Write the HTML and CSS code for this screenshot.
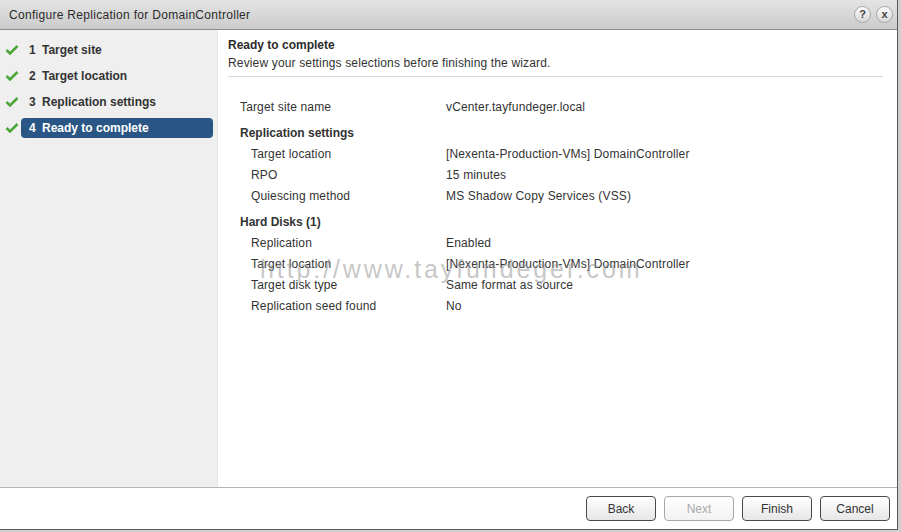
FILE: index.html
```html
<!DOCTYPE html>
<html>
    <head>
        <title>Configure Replication for DomainController</title>
        <meta charset="UTF-8">
        <link rel="stylesheet" href="styles.css">
    </head>
    <body>
        <div class="dialog">
            <div class="titlebar">
                <span class="title">Configure Replication for DomainController</span>
                <div class="title-btns">
                    <span class="round-btn">?</span>
                    <span class="round-btn">x</span>
                </div>
            </div>
            <div class="main">
                <div class="steps">
                    <div class="step">
                        <svg class="check" width="14" height="12" viewBox="0 0 14 12"><polyline points="1.5,6 5,9.5 12.5,2" /></svg>
                        <div class="step-pill"><span class="num">1</span>Target site</div>
                    </div>
                    <div class="step">
                        <svg class="check" width="14" height="12" viewBox="0 0 14 12"><polyline points="1.5,6 5,9.5 12.5,2" /></svg>
                        <div class="step-pill"><span class="num">2</span>Target location</div>
                    </div>
                    <div class="step">
                        <svg class="check" width="14" height="12" viewBox="0 0 14 12"><polyline points="1.5,6 5,9.5 12.5,2" /></svg>
                        <div class="step-pill"><span class="num">3</span>Replication settings</div>
                    </div>
                    <div class="step">
                        <svg class="check" width="14" height="12" viewBox="0 0 14 12"><polyline points="1.5,6 5,9.5 12.5,2" /></svg>
                        <div class="step-pill active"><span class="num">4</span>Ready to complete</div>
                    </div>
                </div>
                <div class="content">
                    <div class="page-head">
                        <div class="page-title">Ready to complete</div>
                        <div class="page-sub">Review your settings selections before finishing the wizard.</div>
                    </div>
                    <div class="summary">
                        <div class="label">Target site name</div>
                        <div class="value">vCenter.tayfundeger.local</div>

                        <div class="section">Replication settings</div>
                        <div class="label sub">Target location</div>
                        <div class="value">[Nexenta-Production-VMs] DomainController</div>
                        <div class="label sub">RPO</div>
                        <div class="value">15 minutes</div>
                        <div class="label sub">Quiescing method</div>
                        <div class="value">MS Shadow Copy Services (VSS)</div>

                        <div class="section">Hard Disks (1)</div>
                        <div class="label sub">Replication</div>
                        <div class="value">Enabled</div>
                        <div class="label sub">Target location</div>
                        <div class="value">[Nexenta-Production-VMs] DomainController</div>
                        <div class="label sub">Target disk type</div>
                        <div class="value">Same format as source</div>
                        <div class="label sub">Replication seed found</div>
                        <div class="value">No</div>
                    </div>
                    <div class="watermark">http://www.tayfundeger.com</div>
                </div>
            </div>
            <div class="footer">
                <button>Back</button>
                <button disabled>Next</button>
                <button>Finish</button>
                <button>Cancel</button>
            </div>
        </div>
    </body>
</html>
```

FILE: styles.css
```css
body{
    margin: 0;
    background-color: #cfcfcf;
    font-family: "Liberation Sans", Arial, sans-serif;
    font-size: 12px;
    letter-spacing: 0.15px;
    color: #333;
}
.dialog{
    width: 897px;
    height: 529px;
    background-color: white;
    border-right: 1px solid #5a5a5a;
    border-bottom: 1px solid #5a5a5a;
    display: flex;
    flex-direction: column;
}
.titlebar{
    height: 29px;
    border-bottom: 1px solid #8e8e8e;
    background: linear-gradient(#e4e4e4, #cbcbcb);
    display: flex;
    align-items: center;
    justify-content: space-between;
    padding: 0 4px 0 9px;
}
.title{
    color: #2b2b2b;
    font-size: 12px;
    letter-spacing: 0.3px;
}
.title-btns{
    display: flex;
    gap: 5px;
}
.round-btn{
    width: 15px;
    height: 15px;
    border-radius: 50%;
    border: 1px solid #a6a6a6;
    background: linear-gradient(#fafafa, #d8d8d8);
    color: #444;
    font-size: 11px;
    font-weight: bold;
    line-height: 15px;
    text-align: center;
    letter-spacing: 0;
}
.main{
    flex: 1;
    display: flex;
    border-bottom: 1px solid #b4b4b4;
}
.steps{
    width: 217px;
    background-color: #efefef;
    border-right: 1px solid #e6e6e6;
    padding-top: 10px;
    display: flex;
    flex-direction: column;
    gap: 6px;
}
.step{
    display: flex;
    align-items: center;
    height: 20px;
}
.check{
    margin: 0 2px 0 5px;
    fill: none;
    stroke: #4ca63a;
    stroke-width: 2.6;
}
.step-pill{
    width: 192px;
    height: 20px;
    line-height: 20px;
    box-sizing: border-box;
    padding-left: 8px;
    border-radius: 4px;
    font-size: 12px;
    font-weight: bold;
    letter-spacing: 0;
    color: #333;
}
.step-pill.active{
    background-color: #2a5685;
    color: white;
}
.num{
    display: inline-block;
    width: 13px;
}
.content{
    flex: 1;
    position: relative;
    padding: 6px 14px 0 10px;
}
.page-head{
    line-height: 18px;
    padding-bottom: 4px;
    border-bottom: 1px solid #d6d6d6;
}
.page-title{
    font-weight: bold;
    letter-spacing: 0;
    color: #2b2b2b;
}
.summary{
    margin-top: 20px;
    padding-left: 12px;
    display: grid;
    grid-template-columns: 206px 1fr;
    line-height: 21px;
}
.label.sub{
    padding-left: 11px;
}
.section{
    grid-column: 1 / 3;
    font-weight: bold;
    letter-spacing: 0;
    margin-top: 5px;
}
.watermark{
    position: absolute;
    left: 42px;
    top: 227px;
    font-size: 25px;
    line-height: 1;
    letter-spacing: 2.9px;
    color: rgba(150, 150, 150, 0.55);
}
.footer{
    height: 41px;
    display: flex;
    align-items: center;
    justify-content: flex-end;
    gap: 8px;
    padding-right: 7px;
}
button{
    width: 70px;
    height: 25px;
    border: 1px solid #4a4a4a;
    border-radius: 4px;
    background: linear-gradient(#ffffff, #e6e6e6);
    font-family: "Liberation Sans", Arial, sans-serif;
    font-size: 12px;
    color: #333;
}
button:disabled{
    border-color: #a8a8a8;
    color: #aaa;
    background: linear-gradient(#ffffff, #f2f2f2);
}
```
